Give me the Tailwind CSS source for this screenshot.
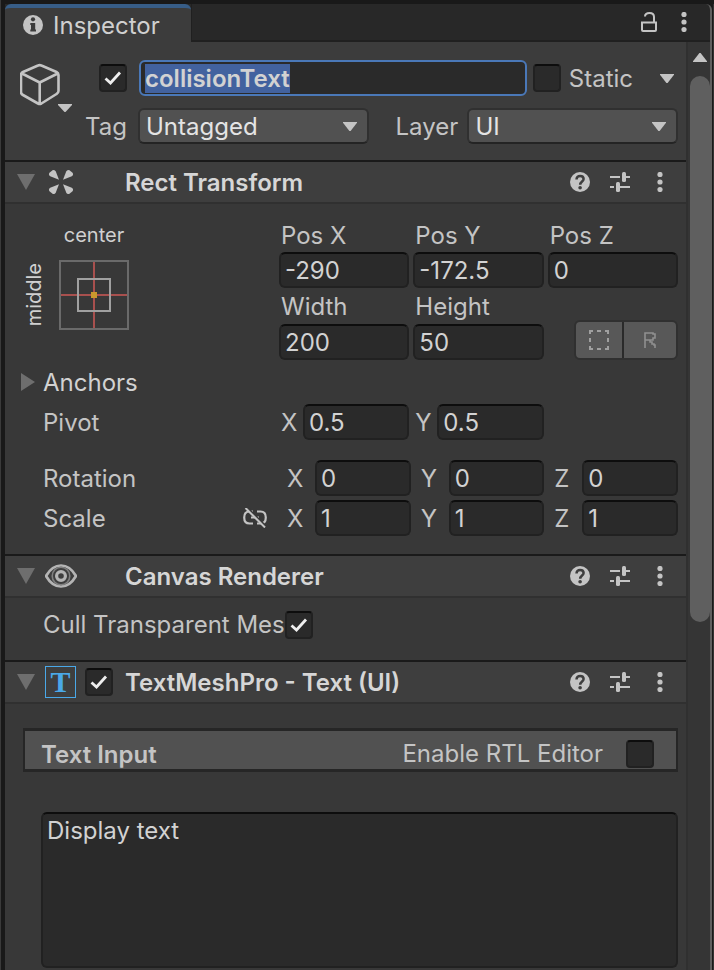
<!DOCTYPE html>
<html lang="en">
<head>
<meta charset="utf-8">
<meta name="viewport" content="width=device-width, initial-scale=1">
<title>Inspector</title>
<script src="https://cdn.jsdelivr.net/npm/@tailwindcss/browser@4"></script>
</head>
<body class="min-h-screen bg-[#191919] font-['Inter','Liberation_Sans',sans-serif] text-2xl leading-[29px] text-[#c4c4c4]">

<!-- Shared icons -->
<svg class="hidden" aria-hidden="true">
  <symbol id="check" viewBox="0 0 28 28"><path d="M6.500 14.500 11.500 19 21 8.500" fill="none" stroke="#eee" stroke-width="2.800"/></symbol>
  <symbol id="down" viewBox="0 0 14 9"><path d="M0 0h14v.8L7.600 9H6.400L0 .8z" fill="#c4c4c4"/></symbol>
  <symbol id="fold" viewBox="0 0 18 16"><path d="M0 0h18L9 16z" fill="#6e6e6e"/></symbol>
  <symbol id="dots" viewBox="0 0 6 20"><g fill="#c4c4c4"><circle cx="3" cy="2.500" r="2.600"/><circle cx="3" cy="10" r="2.600"/><circle cx="3" cy="17.500" r="2.600"/></g></symbol>
  <symbol id="help" viewBox="0 0 20 20"><circle cx="10" cy="10" r="10" fill="#c4c4c4"/><path d="M6.500 7.600C6.500 5.200 8 4 10.100 4s3.500 1.200 3.500 3.100c0 2.400-3.400 2.600-3.400 5.700" fill="none" stroke="#3e3e3e" stroke-width="2.500"/><circle cx="10.100" cy="15.800" r="1.800" fill="#3e3e3e"/></symbol>
  <symbol id="preset" viewBox="0 0 20 20"><g fill="#c4c4c4"><path d="M0 4h10v2H0zM16 4h4v2h-4zM0 14h4v2H0zM10 14h10v2H10z"/><rect x="12" y="0" width="4" height="10" rx="1.500"/><rect x="6" y="10" width="4" height="10" rx="1.500"/></g></symbol>
</svg>

<div class="flex min-h-screen flex-col border-l border-[#3a3a3a] pt-1 pl-1">
  <div class="flex flex-1 flex-col border-r border-[#333]">
  <div class="mr-px flex flex-1 flex-col rounded-tr-md border-r-2 border-[#5f5f5f] bg-[#282828]">

    <!-- Tab strip -->
    <header class="flex h-[38px]">
      <h1 class="flex w-[186px] items-center gap-2.5 rounded-t-md border-t-4 border-[#375d87] bg-[#3c3c3c] pl-[18px] text-[#d0d0d0]">
        <svg class="size-5" viewBox="0 0 20 20"><circle cx="10" cy="10" r="10" fill="#c4c4c4"/><circle cx="10" cy="4.300" r="2.100" fill="#3c3c3c"/><path d="M7.300 8h4.900v6.500h.8V16.500H7.300v-2h.7V10h-.7z" fill="#3c3c3c"/></svg>
        Inspector
      </h1>
      <div class="flex flex-1 items-center justify-end gap-6 border-b-2 border-l border-[#202020] pr-[23px]">
        <button aria-label="Lock"><svg class="block h-5 w-4" viewBox="0 0 16 20"><path d="M1 10.500h14V18q0 1-1 1H2q-1 0-1-1zM4 4.500C4 2 5.500 1 8.500 1S13 2.500 13 5v5.500" fill="none" stroke="#c4c4c4" stroke-width="2"/></svg></button>
        <button aria-label="Panel menu"><svg class="block h-5 w-1.5"><use href="#dots"/></svg></button>
      </div>
    </header>

    <div class="flex flex-1">
      <main class="flex min-w-0 flex-1 flex-col bg-[#383838]">

        <!-- Object header -->
        <section class="flex gap-[27px] bg-[#3c3c3c] pt-[18px] pr-2 pb-4 pl-[15px]">
          <button aria-label="Object icon" class="h-[52px] w-[53px]"><svg class="block h-[52px] w-[53px]" viewBox="0 0 53 52"><path d="M18 5.500q1.700-.8 3.400 0L36.500 12q2 1 2 3v16q0 2-2 3L21.400 43.500q-1.700.8-3.400 0L3 35q-2-1-2-3V15q0-2 2-3zM2 13.500l17.700 9 18-9M19.700 22.500V44" fill="none" stroke="#c4c4c4" stroke-width="2.600" stroke-linejoin="round"/><path d="M38 44h14v1l-6.500 7h-1L38 45z" fill="#c4c4c4"/></svg></button>
          <div class="flex min-w-0 flex-1 flex-col gap-3">
            <div class="flex items-center">
              <span class="-ml-px grid size-7 shrink-0"><input type="checkbox" checked aria-label="Active" class="peer col-start-1 row-start-1 size-7 appearance-none rounded border-2 border-[#212121] border-t-[#0d0d0d] bg-[#2a2a2a]"><svg class="pointer-events-none invisible col-start-1 row-start-1 size-7 peer-checked:visible"><use href="#check"/></svg></span>
              <input id="name" type="text" value="collisionText" aria-label="Name" class="mr-1.5 ml-3 h-9 w-0 min-w-0 flex-1 rounded-md border-2 border-[#4a78b8] bg-[#2a2a2a] px-1 font-semibold text-[#d2d2d2] outline-none selection:bg-[#42629f] selection:text-[#d2d2d2]">
              <label class="flex items-center gap-2"><span class="grid size-7"><input type="checkbox" class="peer col-start-1 row-start-1 size-7 appearance-none rounded border-2 border-[#212121] border-t-[#0d0d0d] bg-[#2a2a2a]"><svg class="pointer-events-none invisible col-start-1 row-start-1 size-7 peer-checked:visible"><use href="#check"/></svg></span>Static</label>
              <button aria-label="Static flags" class="ml-[27px] pr-1"><svg class="block h-[9px] w-3.5"><use href="#down"/></svg></button>
            </div>
            <div class="flex items-center">
              <label for="tag" class="-ml-[15px] w-[53px] shrink-0">Tag</label>
              <div class="grid min-w-0 flex-[232]">
                <select id="tag" class="col-start-1 row-start-1 h-9 w-full appearance-none rounded-md border-2 border-[#303030] border-b-[#242424] bg-[#515151] px-1.5 text-[#e4e4e4]"><option>Untagged</option></select>
                <svg class="pointer-events-none col-start-1 row-start-1 mr-3 h-[9px] w-3.5 self-center justify-self-end"><use href="#down"/></svg>
              </div>
              <label for="layer" class="w-[98px] shrink-0 pl-[26px]">Layer</label>
              <div class="grid min-w-0 flex-[211]">
                <select id="layer" class="col-start-1 row-start-1 h-9 w-full appearance-none rounded-md border-2 border-[#303030] border-b-[#242424] bg-[#515151] px-1.5 text-[#e4e4e4]"><option>UI</option></select>
                <svg class="pointer-events-none col-start-1 row-start-1 mr-3 h-[9px] w-3.5 self-center justify-self-end"><use href="#down"/></svg>
              </div>
            </div>
          </div>
        </section>

        <!-- Rect Transform -->
        <section>
          <div class="flex h-11 items-center border-t-2 border-b-2 border-t-[#1a1a1a] border-b-[#303030] bg-[#3e3e3e] pr-[23px] pl-3">
            <button aria-label="Collapse" class="w-[31px]"><svg class="block h-4 w-[18px]"><use href="#fold"/></svg></button>
            <svg class="mr-[51px] h-[26px] w-[26px] shrink-0" viewBox="0 0 26 26"><g fill="#c4c4c4"><path id="petal" d="M11 10.800 2.200 7.200Q.2 6.200 1.200 4L4.500 1.200Q6.800.2 7.800 2.400z"/><use href="#petal" transform="matrix(-1 0 0 1 26 0)"/><use href="#petal" transform="matrix(1 0 0 -1 0 26)"/><use href="#petal" transform="matrix(-1 0 0 -1 26 26)"/></g></svg>
            <h2 class="flex-1 font-semibold text-[#d6d6d6]">Rect Transform</h2>
            <div class="flex gap-5">
              <button aria-label="Help"><svg class="block size-5"><use href="#help"/></svg></button>
              <button aria-label="Presets"><svg class="block size-5"><use href="#preset"/></svg></button>
              <button aria-label="More" class="pl-[7px]"><svg class="block h-5 w-1.5"><use href="#dots"/></svg></button>
            </div>
          </div>
          <div class="pt-3.5 pr-2 pb-[18px] pl-3.5">
            <div class="flex">
              <div class="grid w-[260px] shrink-0 grid-cols-[30px_70px] grid-rows-[34px_70px] content-start gap-x-2.5 gap-y-2 text-xl leading-7 text-[#d0d0d0]">
                <span class="col-start-2 self-center justify-self-center">center</span>
                <span class="col-start-1 row-start-2 rotate-180 place-self-center [writing-mode:vertical-rl]">middle</span>
                <button aria-label="Anchor presets" class="row-start-2"><svg class="block size-[70px]" viewBox="0 0 70 70"><path d="M35 2v66M2 35h66" stroke="#a8504e" stroke-width="2"/><path d="M1 1h68v68H1z" fill="none" stroke="#6a6a6a" stroke-width="2"/><path d="M19 19h32v32H19z" fill="none" stroke="#a0a0a0" stroke-width="2"/><path d="M32 32h6v6h-6z" fill="#c8982c"/></svg></button>
              </div>
              <div class="grid min-w-0 flex-1 grid-cols-3 grid-rows-[34px_36px_36px_36px] items-center gap-x-1">
                <label for="px" class="pl-0.5">Pos X</label>
                <label for="py" class="pl-0.5">Pos Y</label>
                <label for="pz" class="pl-0.5">Pos Z</label>
                <input id="px" type="text" value="-290" class="h-9 w-full min-w-0 rounded-md border-2 border-[#212121] border-t-[#0d0d0d] bg-[#2a2a2a] px-1 text-[#d2d2d2]">
                <input id="py" type="text" value="-172.5" class="h-9 w-full min-w-0 rounded-md border-2 border-[#212121] border-t-[#0d0d0d] bg-[#2a2a2a] px-1 text-[#d2d2d2]">
                <input id="pz" type="text" value="0" class="h-9 w-full min-w-0 rounded-md border-2 border-[#212121] border-t-[#0d0d0d] bg-[#2a2a2a] px-1 text-[#d2d2d2]">
                <label for="w" class="pl-0.5">Width</label>
                <label for="h" class="col-span-2 pl-0.5">Height</label>
                <input id="w" type="text" value="200" class="h-9 w-full min-w-0 rounded-md border-2 border-[#212121] border-t-[#0d0d0d] bg-[#2a2a2a] px-1 text-[#d2d2d2]">
                <input id="h" type="text" value="50" class="h-9 w-full min-w-0 rounded-md border-2 border-[#212121] border-t-[#0d0d0d] bg-[#2a2a2a] px-1 text-[#d2d2d2]">
                <div class="flex h-10 self-end justify-self-end rounded-md border-2 border-[#303030] bg-[#585858]">
                  <button aria-label="Blueprint mode" class="grid w-12 place-items-center border-r-2 border-[#2a2a2a]"><svg class="size-5" viewBox="0 0 20 20"><path d="M0 1h4M1 0v4M8 1h4M16 1h4M19 0v4M19 8v4M19 16v4M20 19h-4M12 19H8M4 19H0M1 20v-4M1 12V8" fill="none" stroke="#a0a0a0" stroke-width="2"/></svg></button>
                  <button aria-label="Raw edit mode" class="grid w-[52px] place-items-center"><svg class="h-4 w-3" viewBox="0 0 12 16"><path d="M1 16V1h8v1h2v4H9v2H1M6 8v2h2v2h2v1h1v3" fill="none" stroke="#909090" stroke-width="1.600"/></svg></button>
                </div>
              </div>
            </div>
            <div class="flex h-11 items-center">
              <button class="flex items-center text-[#d2d2d2]"><svg class="mr-2 ml-0.5 h-[18px] w-3.5" viewBox="0 0 14 18"><path d="M0 0v18l14-9z" fill="#6e6e6e"/></svg>Anchors</button>
            </div>
            <div class="flex items-center">
              <span class="w-[260px] shrink-0 pl-6">Pivot</span>
              <div class="grid min-w-0 flex-1 grid-cols-3 gap-x-1">
                <label class="flex items-center"><span class="w-6 shrink-0 pl-0.5">X</span><input type="text" value="0.5" class="h-9 w-full min-w-0 rounded-md border-2 border-[#212121] border-t-[#0d0d0d] bg-[#2a2a2a] px-1 text-[#d2d2d2]"></label>
                <label class="flex items-center"><span class="w-6 shrink-0 pl-0.5">Y</span><input type="text" value="0.5" class="h-9 w-full min-w-0 rounded-md border-2 border-[#212121] border-t-[#0d0d0d] bg-[#2a2a2a] px-1 text-[#d2d2d2]"></label>
              </div>
            </div>
            <div class="mt-5 flex items-center">
              <span class="w-[268px] shrink-0 pl-6">Rotation</span>
              <div class="grid min-w-0 flex-1 grid-cols-3 gap-x-2.5">
                <label class="flex items-center"><span class="w-7 shrink-0">X</span><input type="text" value="0" class="h-9 w-full min-w-0 rounded-md border-2 border-[#212121] border-t-[#0d0d0d] bg-[#2a2a2a] px-1 text-[#d2d2d2]"></label>
                <label class="flex items-center"><span class="w-7 shrink-0">Y</span><input type="text" value="0" class="h-9 w-full min-w-0 rounded-md border-2 border-[#212121] border-t-[#0d0d0d] bg-[#2a2a2a] px-1 text-[#d2d2d2]"></label>
                <label class="flex items-center"><span class="w-7 shrink-0">Z</span><input type="text" value="0" class="h-9 w-full min-w-0 rounded-md border-2 border-[#212121] border-t-[#0d0d0d] bg-[#2a2a2a] px-1 text-[#d2d2d2]"></label>
              </div>
            </div>
            <div class="mt-1 flex items-center">
              <div class="flex w-[268px] shrink-0 items-center justify-between pr-5 pl-6">Scale
                <button aria-label="Constrain proportions"><svg class="block h-5 w-6" viewBox="0 0 24 20"><path d="M10 3.500H6.500C3 3.500 1.200 6 1.200 9.500S3 15.500 6.500 15.500H10M14 3.500h3.500c3.500 0 5.300 2.500 5.300 6s-1.800 6-5.300 6H14M8 9.500h8" fill="none" stroke="#c4c4c4" stroke-width="2.200"/><path d="M4 0l19 19" stroke="#383838" stroke-width="3"/><path d="M2.500 0l19.500 19.500" stroke="#c4c4c4" stroke-width="2"/></svg></button>
              </div>
              <div class="grid min-w-0 flex-1 grid-cols-3 gap-x-2.5">
                <label class="flex items-center"><span class="w-7 shrink-0">X</span><input type="text" value="1" class="h-9 w-full min-w-0 rounded-md border-2 border-[#212121] border-t-[#0d0d0d] bg-[#2a2a2a] px-1 text-[#d2d2d2]"></label>
                <label class="flex items-center"><span class="w-7 shrink-0">Y</span><input type="text" value="1" class="h-9 w-full min-w-0 rounded-md border-2 border-[#212121] border-t-[#0d0d0d] bg-[#2a2a2a] px-1 text-[#d2d2d2]"></label>
                <label class="flex items-center"><span class="w-7 shrink-0">Z</span><input type="text" value="1" class="h-9 w-full min-w-0 rounded-md border-2 border-[#212121] border-t-[#0d0d0d] bg-[#2a2a2a] px-1 text-[#d2d2d2]"></label>
              </div>
            </div>
          </div>
        </section>

        <!-- Canvas Renderer -->
        <section>
          <div class="flex h-11 items-center border-t-2 border-b-2 border-t-[#1a1a1a] border-b-[#303030] bg-[#3e3e3e] pr-[23px] pl-3">
            <button aria-label="Collapse" class="w-7"><svg class="block h-4 w-[18px]"><use href="#fold"/></svg></button>
            <svg class="mr-12 h-6 w-8 shrink-0" viewBox="0 0 32 24"><path d="M1 12Q7 1.500 16 1.500T31 12Q25 22.500 16 22.500T1 12z" fill="none" stroke="#b4b4b4" stroke-width="2.700"/><circle cx="16" cy="12" r="8.800" fill="none" stroke="#808080" stroke-width="1.600"/><circle cx="16" cy="12" r="4.400" fill="none" stroke="#b4b4b4" stroke-width="3.200"/></svg>
            <h2 class="flex-1 font-semibold text-[#d6d6d6]">Canvas Renderer</h2>
            <div class="flex gap-5">
              <button aria-label="Help"><svg class="block size-5"><use href="#help"/></svg></button>
              <button aria-label="Presets"><svg class="block size-5"><use href="#preset"/></svg></button>
              <button aria-label="More" class="pl-[7px]"><svg class="block h-5 w-1.5"><use href="#dots"/></svg></button>
            </div>
          </div>
          <div class="flex items-center pt-3 pb-[21px] pl-[38px]">
            <label for="cull" class="w-[242px] shrink-0 whitespace-nowrap">Cull Transparent Mes</label>
            <span class="grid size-7"><input id="cull" type="checkbox" checked class="peer col-start-1 row-start-1 size-7 appearance-none rounded border-2 border-[#212121] border-t-[#0d0d0d] bg-[#2a2a2a]"><svg class="pointer-events-none invisible col-start-1 row-start-1 size-7 peer-checked:visible"><use href="#check"/></svg></span>
          </div>
        </section>

        <!-- TextMeshPro -->
        <section class="flex flex-1 flex-col">
          <div class="flex h-11 items-center border-t-2 border-b-2 border-t-[#1a1a1a] border-b-[#303030] bg-[#3e3e3e] pr-[23px] pl-3">
            <button aria-label="Collapse" class="w-7"><svg class="block h-4 w-[18px]"><use href="#fold"/></svg></button>
            <span class="mr-[9px] grid h-8 w-[31px] shrink-0 place-items-center border border-[#4aa8e8] font-['Liberation_Serif',serif] text-3xl leading-none font-bold text-[#4aa8e8]">T</span>
            <span class="mr-3 grid size-7"><input type="checkbox" checked aria-label="Enabled" class="peer col-start-1 row-start-1 size-7 appearance-none rounded border-2 border-[#212121] border-t-[#0d0d0d] bg-[#2a2a2a]"><svg class="pointer-events-none invisible col-start-1 row-start-1 size-7 peer-checked:visible"><use href="#check"/></svg></span>
            <h2 class="flex-1 font-semibold text-[#d6d6d6]">TextMeshPro - Text (UI)</h2>
            <div class="flex gap-5">
              <button aria-label="Help"><svg class="block size-5"><use href="#help"/></svg></button>
              <button aria-label="Presets"><svg class="block size-5"><use href="#preset"/></svg></button>
              <button aria-label="More" class="pl-[7px]"><svg class="block h-5 w-1.5"><use href="#dots"/></svg></button>
            </div>
          </div>
          <div class="flex flex-1 flex-col gap-10 pt-6 pr-2 pb-0.5 pl-[18px]">
            <div class="flex h-11 items-center justify-between border-x-2 border-y-3 border-[#262626] bg-[#515151] pr-[22px] pl-4">
              <label for="text" class="pt-2 font-semibold">Text Input</label>
              <label class="flex items-end gap-[23px]">Enable RTL Editor<span class="mt-2 grid size-7"><input type="checkbox" class="peer col-start-1 row-start-1 size-7 appearance-none rounded border-2 border-[#212121] border-t-[#0d0d0d] bg-[#2a2a2a]"><svg class="pointer-events-none invisible col-start-1 row-start-1 size-7 peer-checked:visible"><use href="#check"/></svg></span></label>
            </div>
            <textarea id="text" class="ml-[18px] min-h-[156px] flex-1 resize-none rounded-md border-2 border-[#212121] border-t-[#0d0d0d] bg-[#2a2a2a] px-1 py-0.5 text-[#d2d2d2]">Display text</textarea>
          </div>
        </section>
      </main>

      <!-- Scroll track -->
      <div class="flex w-6 shrink-0 flex-col items-end border-l-2 border-[#303030] bg-[#353535]">
        <button aria-label="Scroll up" class="mt-[11px] mr-[3px] mb-3.5"><svg class="block h-[9px] w-3.5 rotate-180"><use href="#down"/></svg></button>
        <div class="h-[546px] w-5 rounded-full bg-[#5f5f5f]"></div>
      </div>
    </div>
  </div>
  </div>
</div>
<script>
  const nameField = document.getElementById('name');
  nameField.focus();
  nameField.select();
</script>
</body>
</html>
